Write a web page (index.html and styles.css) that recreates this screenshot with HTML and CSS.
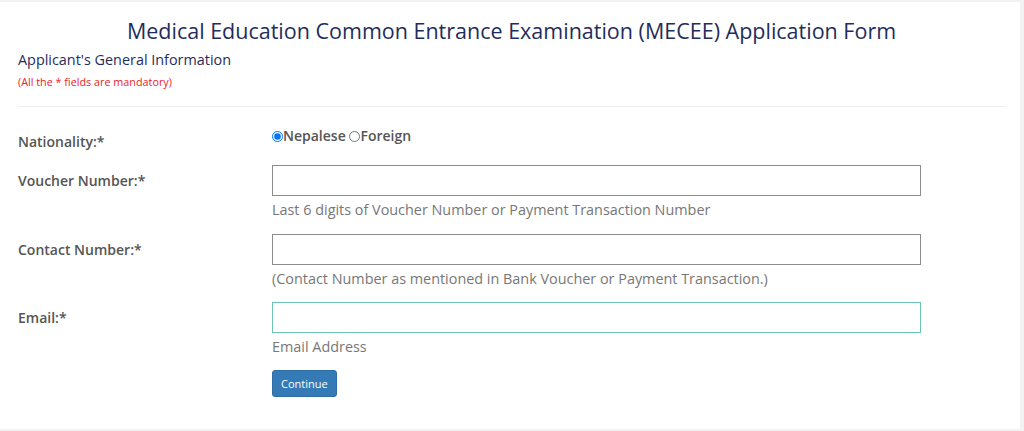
FILE: index.html
```html
<!DOCTYPE html>
<html lang="en">
<head>
    <meta charset="UTF-8">
    <meta name="viewport" content="width=device-width, initial-scale=1.0">
    <title>MECEE Application Form</title>
    <link rel="stylesheet" href="styles.css">
</head>
<body>
    <div class="panel">
        <h2>Medical Education Common Entrance Examination (MECEE) Application Form</h2>
        <h4>Applicant's General Information</h4>
        <p class="mandatory">(All the * fields are mandatory)</p>
        <hr>

        <form id="applyForm">
            <div class="row radio-row">
                <label>Nationality:*</label>
                <div class="field">
                    <label class="radio"><input type="radio" name="nationality" value="nepalese" checked>Nepalese</label>
                    <label class="radio"><input type="radio" name="nationality" value="foreign">Foreign</label>
                </div>
            </div>

            <div class="row">
                <label for="voucher">Voucher Number:*</label>
                <div class="field">
                    <input type="text" id="voucher">
                    <p class="help">Last 6 digits of Voucher Number or Payment Transaction Number</p>
                </div>
            </div>

            <div class="row">
                <label for="contact">Contact Number:*</label>
                <div class="field">
                    <input type="text" id="contact">
                    <p class="help">(Contact Number as mentioned in Bank Voucher or Payment Transaction.)</p>
                </div>
            </div>

            <div class="row">
                <label for="email">Email:*</label>
                <div class="field">
                    <input type="text" id="email" class="active">
                    <p class="help">Email Address</p>
                    <button type="button">Continue</button>
                </div>
            </div>
        </form>
    </div>
</body>
</html>
```

FILE: styles.css
```css
body {
    font-family: "Open Sans", "Liberation Sans", sans-serif;
    background-color: #f2f2f2;
    margin: 0;
}
.panel {
    width: 1020px;
    height: 427px;
    margin-top: 2px;
    background-color: #fff;
    padding: 14px 15px 0 18px;
    box-sizing: border-box;
}
h2 {
    margin: 0;
    font-size: 21.5px;
    line-height: 30px;
    font-weight: 500;
    color: #1f2d5c;
    text-align: center;
}
h4 {
    margin: 4px 0 0;
    font-size: 14.4px;
    line-height: 20px;
    font-weight: 400;
    color: #1f2d5c;
}
.mandatory {
    margin: 5px 0 0;
    font-size: 10.8px;
    line-height: 14px;
    color: #e8232a;
}
hr {
    border: none;
    border-top: 1px solid #eee;
    margin: 17px 0 19px;
}
.row {
    display: grid;
    grid-template-columns: 254px 649px;
    margin-bottom: 13.5px;
}
.radio-row {
    margin-bottom: 13px;
}
.row > label {
    padding-top: 6px;
    font-size: 14px;
    line-height: 20px;
    font-weight: 600;
    color: #555;
}
.field {
    font-size: 14.4px;
    line-height: 20px;
}
.radio {
    font-weight: 600;
    font-size: 14px;
    color: #555;
}
.radio input {
    width: 11px;
    height: 11px;
    margin: 0;
    vertical-align: -1px;
}
input[type="text"] {
    display: block;
    width: 100%;
    height: 31px;
    box-sizing: border-box;
    border: 1px solid #8c8c8c;
    padding: 4px 8px;
    margin: 0;
}
input.active {
    border-color: #6cc4b4;
}
.help {
    margin: 4px 0 0;
    color: #777;
}
button {
    margin-top: 13px;
    background-color: #337ab7;
    color: #fff;
    border: 1px solid #2e6da4;
    border-radius: 3px;
    font-family: inherit;
    font-size: 11px;
    line-height: 15px;
    padding: 5px 8px;
    cursor: pointer;
}
button:hover {
    background-color: #286090;
}
```
